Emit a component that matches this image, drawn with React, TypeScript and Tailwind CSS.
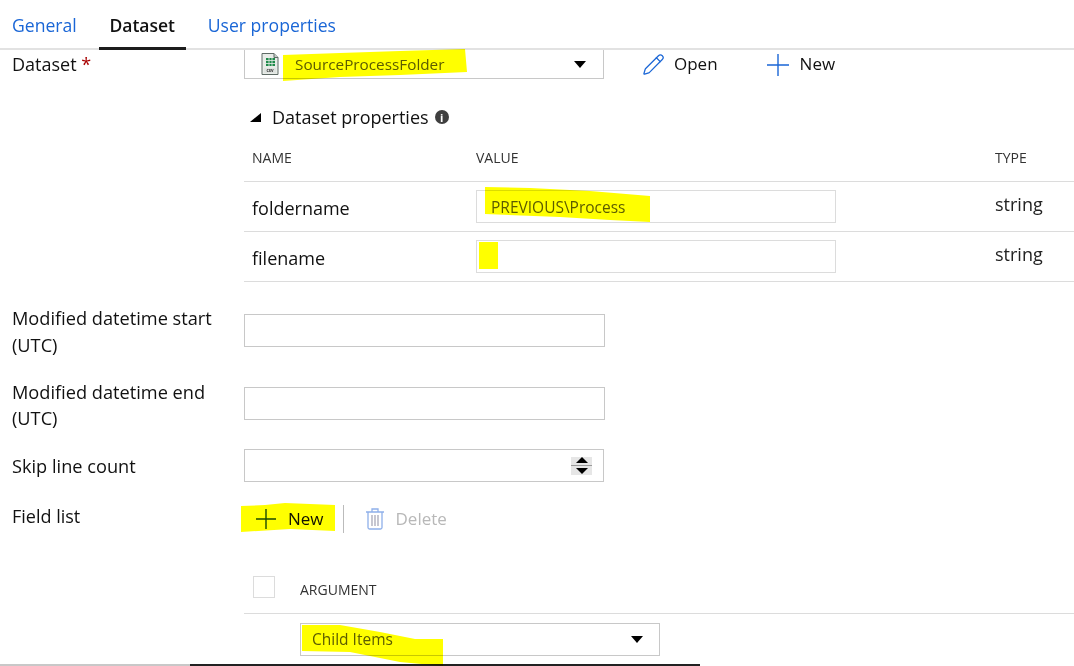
import React from 'react';
import { Pencil } from 'lucide-react';

const Caret = () => (
  <svg width="12" height="7" viewBox="0 0 12 7">
    <path d="M0 0h12L6 7z" fill="#000" />
  </svg>
);

const ThinPlus = ({ size, color }: { size: number; color: string }) => (
  <svg width={size} height={size} viewBox={`0 0 ${size} ${size}`} stroke={color} strokeWidth="1.4">
    <path d={`M0 ${size / 2}H${size}M${size / 2} 0V${size}`} />
  </svg>
);

const CsvIcon = () => (
  <svg width="18" height="22" viewBox="0 0 18 22">
    <path d="M1 .5h12l4 4v17H1z" fill="#e8ece8" stroke="#5f6b66" />
    <path d="M13 .5v4h4" fill="#c5ccc8" stroke="#5f6b66" />
    <path d="M5 5h9v8H5z" fill="#1e8a4a" />
    <path d="M5 7.500h9M5 10.500h9M8 5v8M11 5v8" stroke="#e8ece8" strokeWidth="0.8" />
    <rect x="3" y="15" width="12" height="5" fill="#dfe3e0" />
    <text x="9" y="19.300" textAnchor="middle" fontSize="4.500" fontWeight="700" fill="#333">csv</text>
  </svg>
);

const TrashIcon = () => (
  <svg width="18" height="22" viewBox="0 0 18 22" fill="none" stroke="#8fb0ea" strokeWidth="1.3">
    <path d="M0 4h18M6 4V1h6v3M2 4v15.500q0 1.500 1.500 1.500h11q1.500 0 1.500-1.500V4" />
    <path d="M6 7v11M9 7v11M12 7v11" stroke="#a9a9b8" />
  </svg>
);

const InfoDot = () => (
  <span className="flex h-[14px] w-[14px] items-center justify-center rounded-full bg-[#3f3f3f] text-[11px] leading-none font-bold text-white">
    i
  </span>
);

const Spinner = () => (
  <span className="flex h-[18px] w-[21px] flex-col items-center justify-center gap-[2px] bg-[#e6e6e6]">
    <svg width="12" height="6" viewBox="0 0 12 6">
      <path d="M0 6h12L6 0z" fill="#000" />
    </svg>
    <span className="h-px w-full bg-[#9a9a9a]" />
    <svg width="12" height="6" viewBox="0 0 12 6">
      <path d="M0 0h12L6 6z" fill="#000" />
    </svg>
  </span>
);

const Highlights = () => (
  <svg className="pointer-events-none absolute inset-0 mix-blend-multiply" width="1074" height="666" viewBox="0 0 1074 666">
    <g fill="#ffff00">
      <path d="M283 55L340 53L400 51L465 49L467 72L400 75L340 77L283 81z" />
      <path d="M485 187L530 188L590 191L650 196L650 222L610 220L560 217L485 214z" />
      <path d="M479 242L498 242L498 269L479 269z" />
      <path d="M241 506L265 505L285 503L335 505L335 531L290 529L241 532z" />
      <path d="M302 625L340 625L380 632L415 639L443 639L443 666L400 662L350 652L302 651z" />
    </g>
  </svg>
);

const TextBox = ({ w, children }: { w: string; children?: React.ReactNode }) => (
  <div className={`flex h-[33px] items-center border border-[#c8c8c8] ${w}`}>{children}</div>
);

const PropRow = ({ name, value, type }: { name: string; value?: string; type: string }) => (
  <div className="flex h-[50px] items-center border-b border-[#dcdcdc] pl-[8px]">
    <span className="w-[224px] pt-[3px] text-[18px] leading-[26px]">{name}</span>
    <div className="flex h-[33px] w-[360px] items-center border border-[#dcdcdc] pt-[3px] pl-[14px] text-[15.500px] text-[#5c5c00]">{value}</div>
    <span className="ml-[159px] -mt-[5px] text-[18px] leading-[26px] text-[#222]">{type}</span>
  </div>
);

export default function App() {
  return (
    <div className="relative h-[666px] w-[1074px] overflow-hidden bg-white font-['Open_Sans',sans-serif] text-[#111]">
      {/* tabs */}
      <div className="flex h-[50px] items-stretch border-b-2 border-[#e2e2e2] pl-[12px] text-[17.600px]">
        <span className="pt-[12px] text-[#1a66d6]">General</span>
        <span className="ml-[22px] -mb-[2px] w-[87px] border-b-[3px] border-[#1c1c1c] pt-[12px] text-center text-[17.500px] font-semibold">Dataset</span>
        <span className="ml-[22px] pt-[12px] text-[#1a66d6]">User properties</span>
      </div>

      {/* dataset */}
      <div className="flex h-[29px]">
        <div className="w-[244px] pl-[12px] text-[18px] leading-[28px]">
          Dataset <span className="text-[#a80000]">*</span>
        </div>
        <div className="flex h-[29px] w-[360px] items-center border-x border-b border-[#c8c8c8] pr-[17px] pl-[16px]">
          <CsvIcon />
          <span className="ml-[16px] flex-1 text-[15.300px] text-[#5c5c00]">SourceProcessFolder</span>
          <Caret />
        </div>
        <div className="ml-[38px] flex items-center text-[17px]">
          <Pencil size={23} strokeWidth={1.3} className="text-[#1a66d6]" />
          <span className="ml-[9px] -mt-[2px]">Open</span>
          <span className="ml-[49px]">
            <ThinPlus size={22} color="#1a66d6" />
          </span>
          <span className="ml-[11px] -mt-[2px]">New</span>
        </div>
      </div>

      {/* dataset properties */}
      <div className="ml-[244px]">
        <div className="mt-[25px] flex h-[26px] items-center pl-[6px]">
          <svg width="11" height="9" viewBox="0 0 11 9">
            <path d="M0 9h11V0z" fill="#000" />
          </svg>
          <span className="mr-[6px] ml-[11px] text-[18px]">Dataset properties</span>
          <InfoDot />
        </div>
        <div className="mt-[18px] flex h-[34px] items-start border-b border-[#dcdcdc] pl-[8px] text-[14px] font-medium text-[#333]">
          <span className="w-[224px] leading-[20px]">NAME</span>
          <span className="w-[519px] leading-[20px]">VALUE</span>
          <span className="leading-[20px]">TYPE</span>
        </div>
        <PropRow name="foldername" value="PREVIOUS\Process" type="string" />
        <PropRow name="filename" type="string" />
      </div>

      {/* form fields */}
      <div className="mt-[32px] flex h-[73px]">
        <div className="-mt-[9px] w-[244px] pl-[12px] text-[18.200px] leading-[27px]">
          Modified datetime start
          <br />
          (UTC)
        </div>
        <TextBox w="w-[361px]" />
      </div>
      <div className="flex h-[62px]">
        <div className="-mt-[8px] w-[244px] pl-[12px] text-[18.200px] leading-[26px]">
          Modified datetime end
          <br />
          (UTC)
        </div>
        <TextBox w="w-[361px]" />
      </div>
      <div className="flex h-[56px]">
        <div className="mt-[1px] w-[244px] pl-[12px] text-[18.200px] leading-[33px]">Skip line count</div>
        <TextBox w="w-[360px]">
          <span className="mr-[11px] ml-auto flex">
            <Spinner />
          </span>
        </TextBox>
      </div>

      {/* field list */}
      <div className="flex h-[28px] items-center">
        <div className="-mt-[5px] w-[244px] pl-[12px] text-[18px]">Field list</div>
        <span className="ml-[12px]">
          <ThinPlus size={20} color="#1b4a1b" />
        </span>
        <span className="ml-[12px] text-[17px]">New</span>
        <span className="ml-[19px] h-[28px] w-px bg-[#bbb]" />
        <span className="ml-[22px]">
          <TrashIcon />
        </span>
        <span className="ml-[12px] text-[17px] text-[#b8b8b8]">Delete</span>
      </div>

      {/* arguments */}
      <div className="mt-[43px] ml-[244px]">
        <div className="flex h-[38px] items-start border-b border-[#dcdcdc] pl-[9px]">
          <span className="h-[22px] w-[22px] border border-[#dcdcdc]" />
          <span className="ml-[25px] pt-[3px] text-[14px] font-medium text-[#333]">ARGUMENT</span>
        </div>
        <div className="mt-[9px] ml-[56px] flex h-[33px] w-[360px] items-center justify-between border border-[#c8c8c8] pr-[16px] pl-[11px] text-[15.500px] text-[#5c5c00]">
          <span className="pt-[1px]">Child Items</span>
          <Caret />
        </div>
      </div>

      {/* bottom edge of the captured window */}
      <div className="absolute right-0 bottom-0 left-0 flex h-[2px]">
        <span className="w-[190px] bg-[#c8c8c8]" />
        <span className="w-[510px] bg-[#222]" />
        <span className="flex-1 bg-white" />
      </div>

      <Highlights />
    </div>
  );
}
